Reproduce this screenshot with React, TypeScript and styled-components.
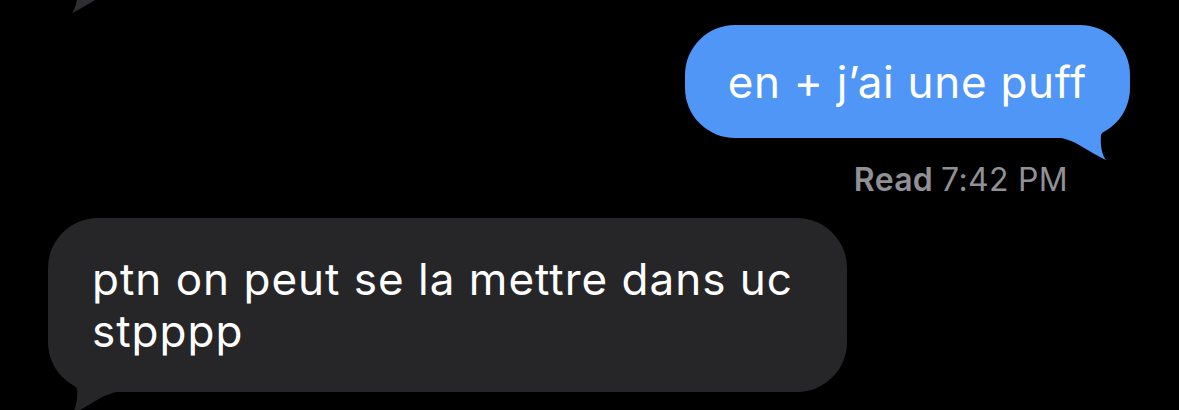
import React from 'react';
import styled, { createGlobalStyle } from 'styled-components';

const GlobalStyle = createGlobalStyle`
  html {
    overflow: hidden;
    background: #000;
  }
  body {
    margin: 0;
    padding: 0;
    min-height: 100vh;
    background: #000;
    font-family: Inter, "Liberation Sans", Arial, sans-serif;
    -webkit-font-smoothing: antialiased;
  }
`;

const colors = {
  outgoing: '#4f96f6',
  incoming: '#262629',
  stub: '#2e2e32',
  meta: '#909095',
};

const Thread = styled.div`
  display: flex;
  flex-direction: column;
  padding: 0 49px 30px 48px;
`;

const Row = styled.div<{ $align: 'start' | 'end'; $gap?: number }>`
  display: flex;
  justify-content: ${({ $align }) => ($align === 'end' ? 'flex-end' : 'flex-start')};
  margin-top: ${({ $gap }) => $gap || 0}px;
`;

const Bubble = styled.div<{ $from: 'me' | 'them' }>`
  position: relative;
  box-sizing: border-box;
  max-width: 799px;
  padding: ${({ $from }) => ($from === 'me' ? '31px 43px 30px' : '35px 44px')};
  border-radius: 50px;
  background: ${({ $from }) => ($from === 'me' ? colors.outgoing : colors.incoming)};
  color: #fff;
  font-size: 44px;
  line-height: 52px;
  letter-spacing: ${({ $from }) => ($from === 'me' ? '0.7px' : '1px')};
  white-space: pre-wrap;
`;

const TailStub = styled.div`
  position: relative;
  height: 14px;
`;

const TailSvg = styled.svg<{ $side: 'left' | 'right'; $bottom: number }>`
  position: absolute;
  bottom: ${({ $bottom }) => $bottom}px;
  ${({ $side }) => ($side === 'right' ? 'right: 2px;' : 'left: 2px; transform: scaleX(-1);')}
`;

const Status = styled.div`
  padding-right: 62px;
  color: ${colors.meta};
  font-size: 32px;
  line-height: 38px;
  letter-spacing: 0.3px;
`;

const StatusKey = styled.span`
  font-weight: 600;
  margin-right: 8px;
`;

interface TailProps {
  side: 'left' | 'right';
  color: string;
  bottom?: number;
}

const Tail: React.FC<TailProps> = ({ side, color, bottom = -23 }) => (
  <TailSvg $side={side} $bottom={bottom} width="68" height="61" viewBox="0 0 68 61">
    <path
      d="M0,0 H67 C66,10 48,22 41,35 C40,45 42,55 46,60 C32,54 14,39 0,38 Z"
      fill={color}
    />
  </TailSvg>
);

const App: React.FC = () => (
  <>
    <GlobalStyle />
    <Thread>
      <TailStub>
        <Tail side="left" color={colors.stub} bottom={0} />
      </TailStub>
      <Row $align="end" $gap={11}>
        <Bubble $from="me">
          en + j’ai une puff
          <Tail side="right" color={colors.outgoing} />
        </Bubble>
      </Row>
      <Row $align="end" $gap={23}>
        <Status>
          <StatusKey>Read</StatusKey>7:42 PM
        </Status>
      </Row>
      <Row $align="start" $gap={19}>
        <Bubble $from="them">
          ptn on peut se la mettre dans uc stpppp
          <Tail side="left" color={colors.incoming} />
        </Bubble>
      </Row>
    </Thread>
  </>
);

export default App;
